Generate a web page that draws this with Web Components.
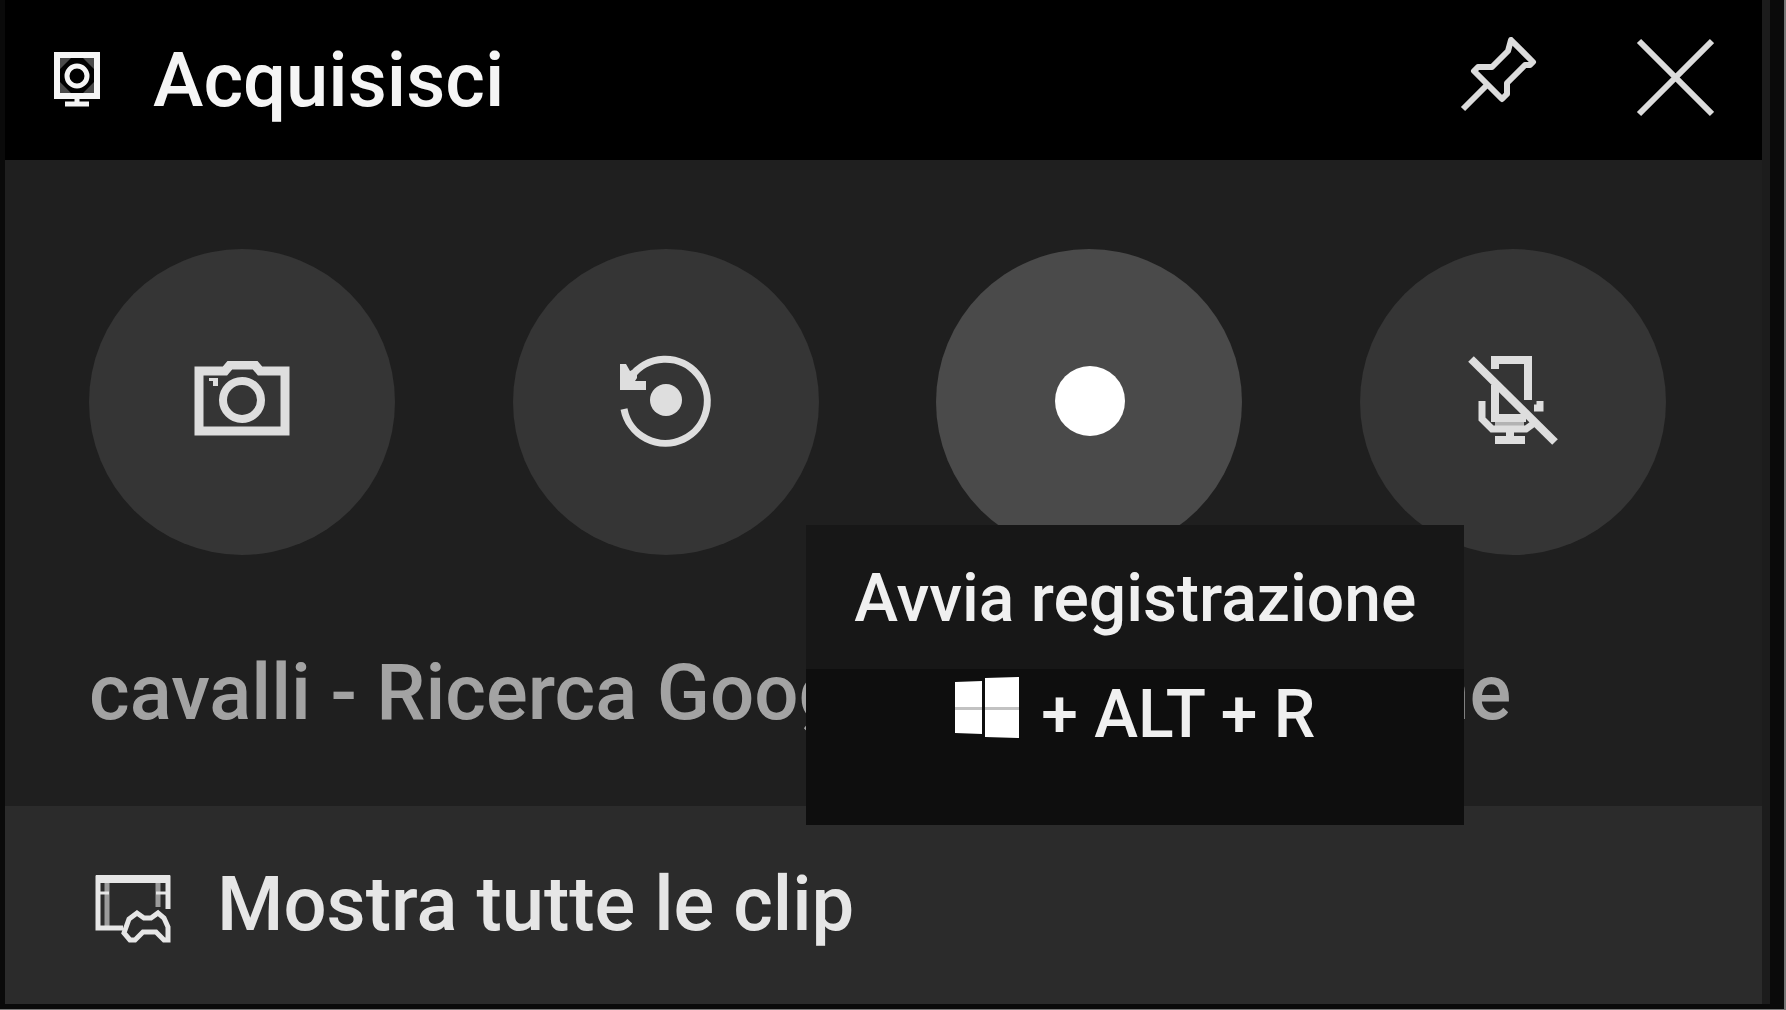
<!DOCTYPE html>
<html lang="it">
<head>
<meta charset="utf-8">
<meta name="viewport" content="width=device-width, initial-scale=1">
<title>Acquisisci</title>
<style>
  :root {
    --head: #000;
    --panel: #1f1f1f;
    --foot: #2b2b2b;
    --disc: #353535;
    --disc-hot: #4a4a4a;
    --ink: #e6e6e6;
    --muted: #a3a3a3;
  }
  html { height: 100%; }
  body {
    margin: 0;
    min-height: 100%;
    display: grid;
    background: #0a0a0a;
    color: var(--ink);
    font-family: Roboto, "Liberation Sans", sans-serif;
    font-weight: 500;
  }
</style>
</head>
<body>
<capture-widget>
  <widget-header slot="header">Acquisisci</widget-header>
  <capture-button icon="camera" label="Acquisisci screenshot"></capture-button>
  <capture-button icon="replay" label="Registra gli ultimi 30 secondi"></capture-button>
  <capture-button icon="record" label="Avvia registrazione" hot>
    <key-tip slot="tip">Avvia registrazione<span slot="keys">+ ALT + R</span></key-tip>
  </capture-button>
  <capture-button icon="mic" label="Attiva microfono"></capture-button>
  <span slot="source">cavalli - Ricerca Google - Google Chrome</span>
  <clip-link slot="footer" href="#clip">Mostra tutte le clip</clip-link>
</capture-widget>

<script>
  const icons = {
    monitor: /*html*/ `
      <svg width="48" height="60" viewBox="0 0 48 60" fill="none" stroke="currentColor" stroke-width="6">
        <path d="M4 5H44V46H4Z"/>
        <circle cx="24" cy="26" r="10" stroke-width="5"/>
        <path d="M7 8H18L7 19ZM41 8H30L41 19ZM7 43H18L7 32ZM41 43H30L41 32Z" fill="currentColor" stroke="none" opacity=".3"/>
        <path d="M24 46V54M12 54H36" stroke-width="5"/>
      </svg>`,
    pin: /*html*/ `
      <svg width="80" height="88" viewBox="0 0 80 88" fill="none" stroke="currentColor" stroke-width="6" stroke-linejoin="round">
        <path d="M54 4L76 26L73 29H68L50 47V58L45 63L17 35L21 31H35L51 15Z"/>
        <path d="M30 49L6 73"/>
      </svg>`,
    close: /*html*/ `
      <svg width="80" height="88" viewBox="0 0 80 88" fill="none" stroke="currentColor" stroke-width="6">
        <path d="M5 5L78 78M78 5L5 78"/>
      </svg>`,
    camera: /*html*/ `
      <svg width="96" height="82" viewBox="0 0 96 82" fill="none" stroke="currentColor" stroke-width="9">
        <path d="M5 10H31L36 4H61L66 10H91V70H5Z"/>
        <circle cx="48" cy="39" r="19" stroke-width="8"/>
        <path d="M15 17H24V25H19V20H15Z" stroke="none" fill="currentColor"/>
      </svg>`,
    replay: /*html*/ `
      <svg width="96" height="94" viewBox="0 0 96 94" fill="none" stroke="currentColor" stroke-width="7">
        <path d="M13 22A42 42 0 1 1 6 54"/>
        <path d="M2 9H8L12 16L19 13V23L17 26H28V35H2Z" fill="currentColor" stroke="none"/>
        <circle cx="48" cy="45" r="16" fill="currentColor" stroke="none"/>
      </svg>`,
    record: /*html*/ `
      <svg width="72" height="72" viewBox="0 0 72 72">
        <circle cx="37" cy="35" r="35" fill="#fff"/>
      </svg>`,
    mic: /*html*/ `
      <svg width="92" height="92" viewBox="0 0 92 92" fill="none" stroke="currentColor" stroke-width="8">
        <path d="M28 13V4H61V44"/>
        <path d="M28 29V62H59"/>
        <path d="M15 45V63L25 73H59L66 68M73 45V52H67" stroke-width="7"/>
        <path d="M28 62H57V73H28Z" fill="currentColor" stroke="none" opacity=".75"/>
        <path d="M43 71V83M28 84H58"/>
        <path d="M4 3L88 86"/>
      </svg>`,
    clips: /*html*/ `
      <svg width="78" height="78" viewBox="0 0 78 78" fill="none" stroke="currentColor" stroke-width="5">
        <path d="M28 63H3V13H73V44"/>
        <path d="M1 14H75" stroke-width="8"/>
        <path d="M12 17V61M63 17V42" stroke-width="5" opacity=".6"/>
        <path d="M5 28H14M61 28H71" stroke-width="3"/>
        <path d="M35 75L29 68L34 54L42 48L49 53H56L63 48L69 53L73 62V75H69L61 67H48L40 75Z"/>
      </svg>`,
    windows: /*html*/ `
      <svg width="66" height="62" viewBox="0 0 66 62" fill="#fff">
        <path d="M0 5L27 4V30H0ZM30 1L64 0V30H30ZM0 33H27V57L0 56ZM30 33H64V61L30 60Z"/>
        <path d="M0 30H27V33H0ZM30 30H64V33H30Z" opacity=".75"/>
      </svg>`
  };

  class WidgetHeader extends HTMLElement {
    connectedCallback() {
      this.attachShadow({ mode: "open" }).innerHTML = /*html*/ `
        <style>
          :host { display: flex; align-items: center; height: 160px; padding: 0 48px;
            background: var(--head); color: #f5f5f5; }
          h1 { flex: 1; margin: 0 0 0 52px; font-size: 76px; line-height: 88px; font-weight: 500; }
          svg { display: block; }
          nav { display: flex; gap: 97px; color: #dcdcdc; }
          button { padding: 0; border: 0; background: none; color: inherit; cursor: pointer; }
        </style>
        ${icons.monitor}
        <h1><slot></slot></h1>
        <nav>
          <button aria-label="Aggiungi">${icons.pin}</button>
          <button aria-label="Chiudi">${icons.close}</button>
        </nav>
      `;
    }
  }
  customElements.define("widget-header", WidgetHeader);

  class CaptureButton extends HTMLElement {
    connectedCallback() {
      this.attachShadow({ mode: "open" }).innerHTML = /*html*/ `
        <style>
          :host { display: block; position: relative; }
          button { display: grid; place-items: center; width: 306px; height: 306px; padding: 0;
            border: 0; border-radius: 50%; background: var(--disc); color: #dedede; cursor: pointer; }
          :host([hot]) { z-index: 1; }
          :host([hot]) button { background: var(--disc-hot); }
          ::slotted(key-tip) { position: absolute; top: 276px; left: -130px; }
        </style>
        <button aria-label="${this.getAttribute("label")}">${icons[this.getAttribute("icon")]}</button>
        <slot name="tip"></slot>
      `;
    }
  }
  customElements.define("capture-button", CaptureButton);

  class KeyTip extends HTMLElement {
    connectedCallback() {
      this.attachShadow({ mode: "open" }).innerHTML = /*html*/ `
        <style>
          :host { display: block; width: 658px; background: #0e0e0e; color: #f0f0f0;
            font-size: 66px; line-height: 76px; white-space: nowrap; text-align: center; }
          .name { padding: 36px 0 32px; background: #171717; }
          .keys { display: flex; justify-content: center; gap: 20px; padding: 8px 0 72px; }
        </style>
        <div class="name"><slot></slot></div>
        <div class="keys">${icons.windows}<slot name="keys"></slot></div>
      `;
    }
  }
  customElements.define("key-tip", KeyTip);

  class ClipLink extends HTMLElement {
    connectedCallback() {
      this.attachShadow({ mode: "open" }).innerHTML = /*html*/ `
        <style>
          :host { display: block; background: var(--foot); }
          a { display: flex; align-items: center; gap: 44px; padding: 54px 90px 56px; color: inherit;
            text-decoration: none; font-size: 76px; line-height: 88px; }
        </style>
        <a href="${this.getAttribute("href")}">${icons.clips}<slot></slot></a>
      `;
    }
  }
  customElements.define("clip-link", ClipLink);

  class CaptureWidget extends HTMLElement {
    connectedCallback() {
      // the gradient is the sliver of desktop that shows beside the title bar
      this.attachShadow({ mode: "open" }).innerHTML = /*html*/ `
        <style>
          :host { display: flex; flex-direction: column; padding: 0 14px 5px 5px;
            border-right: 2px solid #777; border-bottom: 1px solid #777; }
          main { flex: 1; display: flex; flex-direction: column; border-right: 8px solid #1c1c1c;
            background: linear-gradient(#8f8f88, #8f8f88) right top / 6px 10px no-repeat border-box, var(--panel); }
          .row { display: flex; justify-content: space-between; padding: 89px 96px 0 84px; }
          p { margin: 94px 84px 0; color: var(--muted); font-size: 78px; line-height: 88px;
            white-space: nowrap; }
          .foot { margin-top: auto; }
        </style>
        <main>
          <slot name="header"></slot>
          <div class="row"><slot></slot></div>
          <p><slot name="source"></slot></p>
          <div class="foot"><slot name="footer"></slot></div>
        </main>
      `;
    }
  }
  customElements.define("capture-widget", CaptureWidget);
</script>
</body>
</html>
